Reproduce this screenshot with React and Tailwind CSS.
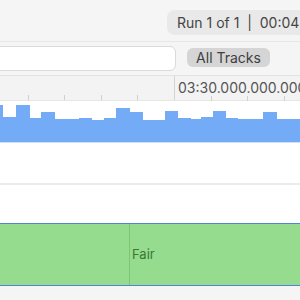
import React from 'react';

const bars = [
  [0, 3, 105], [3, 16, 117], [16, 30, 105], [30, 41, 118], [41, 55, 112],
  [55, 79, 119], [79, 92, 118], [92, 104, 120], [104, 116, 118], [116, 130, 108],
  [130, 143, 112], [143, 165, 120], [165, 178, 111], [178, 191, 118], [191, 201, 119],
  [201, 213, 117], [213, 226, 111], [226, 238, 118], [238, 251, 119], [251, 263, 119],
  [263, 277, 112], [277, 300, 119],
];

function Tick() {
  return <div className="w-px h-[5px] bg-[#d0d0d0] shrink-0" />;
}

export default function App() {
  return (
    <div className="w-[300px] h-[300px] overflow-hidden bg-[#f5f5f5] flex flex-col text-[#454545]" style={{ fontFamily: 'Inter, "Liberation Sans", sans-serif' }}>
      {/* Run info */}
      <div className="h-[42px] shrink-0 border-b border-[#e6e6e6] pt-[10px]">
        <div className="ml-[167px] h-[25px] w-[160px] rounded-lg bg-[#e9e9e9] pl-[10px] flex items-center text-[14px] whitespace-nowrap">
          Run 1 of 1&nbsp;&nbsp;|&nbsp;&nbsp;00:04
        </div>
      </div>

      {/* Search row */}
      <div className="h-[34px] shrink-0 flex items-start pt-[4px] border-b border-[#e3e3e3]">
        <div className="-ml-[10px] w-[186px] shrink-0 h-[25px] rounded-md bg-white border border-[#dadada]" />
        <div className="ml-[11px] mt-[2px] h-[19px] w-[83px] shrink-0 rounded-md bg-[#d5d5d5] flex items-center justify-center text-[14px] text-[#3f3f3f]">
          All Tracks
        </div>
      </div>

      {/* Ruler */}
      <div className="h-[25px] shrink-0 bg-[#f3f3f3] flex border-b border-[#e6e6e6]">
        <div className="w-[174px] shrink-0 h-full flex items-end gap-[35.6px] pl-[27.5px]">
          <Tick /><Tick /><Tick /><Tick />
        </div>
        <div className="flex-1 min-w-0 h-full border-l border-[#d4d4d4] flex flex-col">
          <div className="pl-[3px] pt-[3px] text-[14px] leading-[17px] whitespace-nowrap text-[#555]">03:30.000.000.000</div>
          <div className="mt-auto flex items-end gap-[35.6px] pl-[35.6px]">
            <Tick /><Tick /><Tick />
          </div>
        </div>
      </div>

      {/* Chart */}
      <div className="h-[42px] shrink-0 bg-white flex items-end border-b border-[#cfe0f7]">
        {bars.map(([a, b, top], i) => (
          <div key={i} className="bg-[#74abf6] shrink-0" style={{ width: b - a, height: 142 - top }} />
        ))}
      </div>

      {/* Empty tracks */}
      <div className="h-[42px] shrink-0 bg-white border-b-2 border-[#ebebeb]" />
      <div className="h-[38px] shrink-0 bg-white" />

      {/* State track */}
      <div className="h-[63px] shrink-0 border-y border-[#4f84dc] bg-[#95dc8f] flex">
        <div className="w-[130px] shrink-0 h-full border-r border-[#7cc476]" />
        <div className="flex-1 flex items-center pl-[2px] text-[13px] text-[#3b7632]">Fair</div>
      </div>
    </div>
  );
}
